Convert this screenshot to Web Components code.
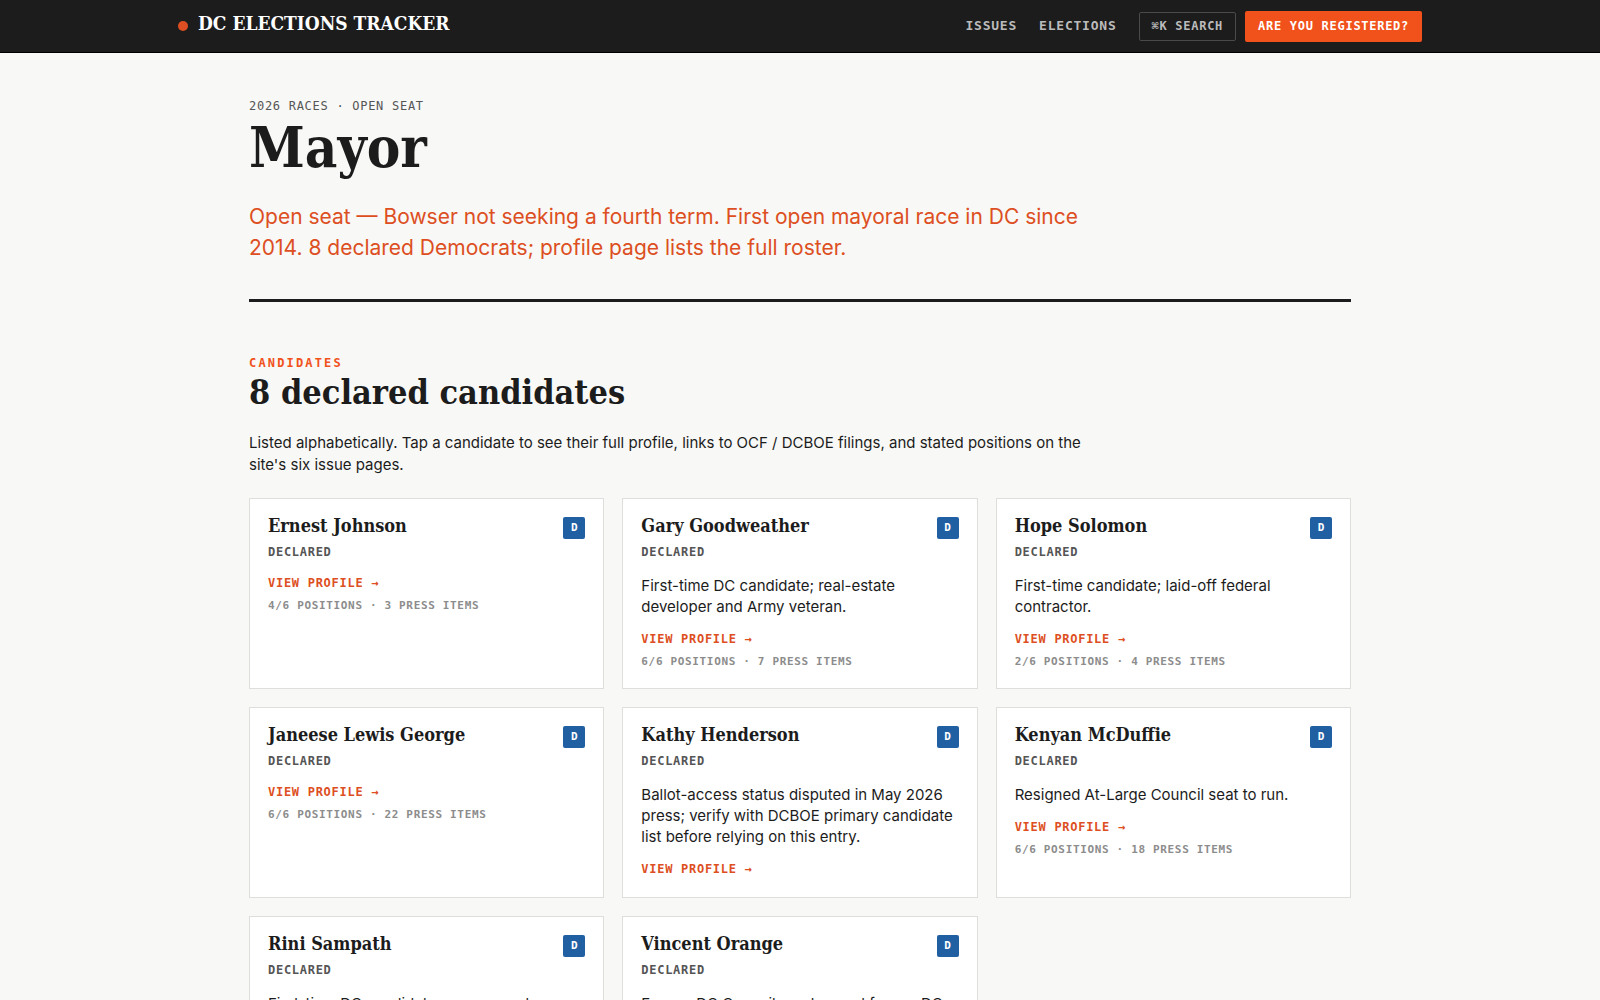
<!DOCTYPE html>
<html lang="en">
<head>
<meta charset="utf-8">
<title>Mayor · DC Elections Tracker</title>
<style>
    :root {
        --ink: #1c1c1c;
        --paper: #f8f8f6;
        --accent: #dd4f22;
        --accent-bright: #f1511b;
        --muted: #555;
        --faint: #8c8c8c;
        --line: #dededa;
        --party-d: #215fa3;
        --slab: Rockwell, "DejaVu Serif Condensed", "DejaVu Serif", serif;
        --sans: Inter, "Liberation Sans", sans-serif;
        --mono: "DejaVu Sans Mono", "Liberation Mono", monospace;
    }

    body {
        margin: 0;
        background: var(--paper);
        color: var(--ink);
        font-family: var(--sans);
    }
</style>
</head>
<body>
<site-header brand="DC ELECTIONS TRACKER">
    <nav-link href="#issues">ISSUES</nav-link>
    <nav-link href="#elections">ELECTIONS</nav-link>
</site-header>

<race-page>
    <race-hero eyebrow="2026 RACES · OPEN SEAT" heading="Mayor">
        Open seat — Bowser not seeking a fourth term. First open mayoral race in DC since 2014. 8 declared Democrats; profile page lists the full roster.
    </race-hero>

    <candidate-section kicker="CANDIDATES" heading="8 declared candidates">
        <span slot="intro">Listed alphabetically. Tap a candidate to see their full profile, links to OCF / DCBOE filings, and stated positions on the site's six issue pages.</span>

        <candidate-card name="Ernest Johnson" meta="4/6 POSITIONS · 3 PRESS ITEMS"></candidate-card>
        <candidate-card name="Gary Goodweather" meta="6/6 POSITIONS · 7 PRESS ITEMS">First-time DC candidate; real-estate developer and Army veteran.</candidate-card>
        <candidate-card name="Hope Solomon" meta="2/6 POSITIONS · 4 PRESS ITEMS">First-time candidate; laid-off federal contractor.</candidate-card>
        <candidate-card name="Janeese Lewis George" meta="6/6 POSITIONS · 22 PRESS ITEMS"></candidate-card>
        <candidate-card name="Kathy Henderson">Ballot-access status disputed in May 2026 press; verify with DCBOE primary candidate list before relying on this entry.</candidate-card>
        <candidate-card name="Kenyan McDuffie" meta="6/6 POSITIONS · 18 PRESS ITEMS">Resigned At-Large Council seat to run.</candidate-card>
        <candidate-card name="Rini Sampath">First-time DC candidate; government contractor.</candidate-card>
        <candidate-card name="Vincent Orange">Former DC Councilmember and former DC</candidate-card>
    </candidate-section>
</race-page>

<script>
class SiteHeader extends HTMLElement {
    constructor() {
        super();
        this.attachShadow({ mode: 'open' });

        const template = document.createElement('template');
        template.innerHTML = `
            <style>
                :host {
                    display: block;
                    background: var(--ink);
                    border-bottom: 1px solid #000;
                }

                .bar {
                    box-sizing: border-box;
                    max-width: 1280px;
                    min-height: 52px;
                    margin: 0 auto;
                    padding: 0 18px;
                    display: flex;
                    align-items: center;
                    justify-content: space-between;
                }

                .brand {
                    display: flex;
                    align-items: center;
                    gap: 10px;
                    color: #fff;
                    text-decoration: none;
                    font: bold 19px/24px var(--slab);
                }

                .name {
                    padding-bottom: 6px;
                }

                .dot {
                    width: 10px;
                    height: 10px;
                    border-radius: 50%;
                    background: var(--accent);
                }

                nav {
                    display: flex;
                    align-items: center;
                    gap: 22px;
                }

                .actions {
                    display: flex;
                    align-items: center;
                    gap: 9px;
                }

                .search,
                .register {
                    font: bold 12px/15px var(--mono);
                    letter-spacing: 0.06em;
                    border-radius: 2px;
                    cursor: pointer;
                }

                .search {
                    padding: 6px 12px;
                    border: 1px solid #4a4a4a;
                    background: transparent;
                    color: #bbb;
                }

                .register {
                    padding: 8px 13px;
                    background: var(--accent-bright);
                    color: #fff;
                    text-decoration: none;
                }
            </style>
            <header class="bar">
                <a class="brand" href="#home"><span class="dot"></span><span class="name"></span></a>
                <nav>
                    <slot></slot>
                    <div class="actions">
                        <button class="search" type="button">⌘K SEARCH</button>
                        <a class="register" href="#register">ARE YOU REGISTERED?</a>
                    </div>
                </nav>
            </header>
        `;

        this.shadowRoot.appendChild(template.content.cloneNode(true));
        this.shadowRoot.querySelector('.name').textContent = this.getAttribute('brand');
    }
}

class NavLink extends HTMLElement {
    constructor() {
        super();
        this.attachShadow({ mode: 'open' });

        const template = document.createElement('template');
        template.innerHTML = `
            <style>
                :host {
                    display: block;
                }

                a {
                    display: block;
                    color: #bbb;
                    text-decoration: none;
                    font: bold 13px/20px var(--mono);
                    letter-spacing: 0.06em;
                }

                a:hover {
                    color: #fff;
                }
            </style>
            <a><slot></slot></a>
        `;

        this.shadowRoot.appendChild(template.content.cloneNode(true));
        this.shadowRoot.querySelector('a').href = this.getAttribute('href');
    }
}

class RacePage extends HTMLElement {
    constructor() {
        super();
        this.attachShadow({ mode: 'open' });

        const template = document.createElement('template');
        template.innerHTML = `
            <style>
                :host {
                    display: block;
                    max-width: 1102px;
                    margin: 0 auto;
                    padding: 44px 18px;
                }
            </style>
            <main><slot></slot></main>
        `;

        this.shadowRoot.appendChild(template.content.cloneNode(true));
    }
}

class RaceHero extends HTMLElement {
    constructor() {
        super();
        this.attachShadow({ mode: 'open' });

        const template = document.createElement('template');
        template.innerHTML = `
            <style>
                :host {
                    display: block;
                    padding-bottom: 36px;
                    border-bottom: 3px solid var(--ink);
                }

                .eyebrow {
                    color: var(--muted);
                    font: 12px/18px var(--mono);
                    letter-spacing: 0.06em;
                }

                h1 {
                    margin: 2px 0 24px;
                    font: bold 56px/60px var(--slab);
                }

                .lead {
                    max-width: 860px;
                    margin: 0;
                    color: var(--accent);
                    font-size: 21px;
                    line-height: 31px;
                }
            </style>
            <div class="eyebrow"></div>
            <h1></h1>
            <p class="lead"><slot></slot></p>
        `;

        this.shadowRoot.appendChild(template.content.cloneNode(true));
        this.shadowRoot.querySelector('.eyebrow').textContent = this.getAttribute('eyebrow');
        this.shadowRoot.querySelector('h1').textContent = this.getAttribute('heading');
    }
}

class CandidateSection extends HTMLElement {
    constructor() {
        super();
        this.attachShadow({ mode: 'open' });

        const template = document.createElement('template');
        template.innerHTML = `
            <style>
                :host {
                    display: block;
                    padding-top: 52px;
                }

                .kicker {
                    color: var(--accent-bright);
                    font: bold 12px/18px var(--mono);
                    letter-spacing: 0.18em;
                }

                h2 {
                    margin: 0 0 20px;
                    font: bold 34px/40px var(--slab);
                }

                .intro {
                    max-width: 860px;
                    margin: 0 0 22px;
                    font-size: 15px;
                    line-height: 22px;
                }

                .grid {
                    display: grid;
                    grid-template-columns: repeat(3, minmax(0, 1fr));
                    gap: 18px;
                }

                @media (max-width: 900px) {
                    .grid {
                        grid-template-columns: minmax(0, 1fr);
                    }
                }
            </style>
            <section>
                <div class="kicker"></div>
                <h2></h2>
                <p class="intro"><slot name="intro"></slot></p>
                <div class="grid"><slot></slot></div>
            </section>
        `;

        this.shadowRoot.appendChild(template.content.cloneNode(true));
        this.shadowRoot.querySelector('.kicker').textContent = this.getAttribute('kicker');
        this.shadowRoot.querySelector('h2').textContent = this.getAttribute('heading');
    }
}

class CandidateCard extends HTMLElement {
    constructor() {
        super();
        this.attachShadow({ mode: 'open' });

        const template = document.createElement('template');
        template.innerHTML = `
            <style>
                :host {
                    display: block;
                    box-sizing: border-box;
                    padding: 18px;
                    background: #fff;
                    border: 1px solid var(--line);
                }

                .head {
                    display: flex;
                    align-items: flex-start;
                    justify-content: space-between;
                    gap: 10px;
                }

                h3 {
                    margin: 0;
                    font: bold 18px/18px var(--slab);
                }

                .party {
                    width: 22px;
                    border-radius: 2px;
                    background: var(--party-d);
                    color: #fff;
                    font: bold 11px/22px var(--mono);
                    text-align: center;
                }

                .status,
                .profile,
                .meta {
                    display: block;
                    font: bold 12px/18px var(--mono);
                    letter-spacing: 0.06em;
                }

                .status {
                    margin-top: 4px;
                    color: var(--muted);
                }

                .bio {
                    margin: 14px 0 0;
                    font-size: 15px;
                    line-height: 21px;
                }

                .profile {
                    margin-top: 12px;
                    color: var(--accent);
                    line-height: 20px;
                    text-decoration: none;
                }

                .meta {
                    margin-top: 5px;
                    color: var(--faint);
                    font-size: 11px;
                    line-height: 16px;
                }
            </style>
            <article>
                <div class="head">
                    <h3></h3>
                    <span class="party" title="Democrat">D</span>
                </div>
                <div class="status">DECLARED</div>
                <p class="bio"><slot></slot></p>
                <a class="profile" href="#profile">VIEW PROFILE →</a>
                <div class="meta"></div>
            </article>
        `;

        this.shadowRoot.appendChild(template.content.cloneNode(true));
        this.shadowRoot.querySelector('h3').textContent = this.getAttribute('name');

        // drop the optional rows a candidate has no content for
        if (!this.textContent.trim()) {
            this.shadowRoot.querySelector('.bio').remove();
        }

        const meta = this.shadowRoot.querySelector('.meta');
        if (this.hasAttribute('meta')) {
            meta.textContent = this.getAttribute('meta');
        } else {
            meta.remove();
        }
    }
}

customElements.define('site-header', SiteHeader);
customElements.define('nav-link', NavLink);
customElements.define('race-page', RacePage);
customElements.define('race-hero', RaceHero);
customElements.define('candidate-section', CandidateSection);
customElements.define('candidate-card', CandidateCard);
</script>
</body>
</html>
